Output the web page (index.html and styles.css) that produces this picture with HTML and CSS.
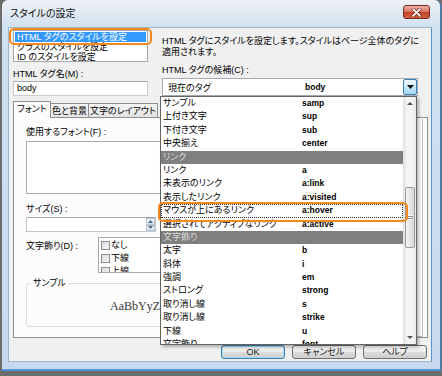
FILE: index.html
```html
<!DOCTYPE html>
<html lang="ja">
<head>
<meta charset="utf-8">
<title>スタイルの設定</title>
<link rel="stylesheet" href="styles.css">
</head>
<body>
<div class="window">
  <div class="titlebar">
    <span class="title">スタイルの設定</span>
    <span class="close"><svg width="11" height="9" viewBox="0 0 11 9"><path d="M2 1.2 L9 7.8 M9 1.2 L2 7.8" stroke="#6a2419" stroke-width="3" stroke-linecap="round"/><path d="M2 1.2 L9 7.8 M9 1.2 L2 7.8" stroke="#fff" stroke-width="1.7" stroke-linecap="round"/></svg></span>
  </div>
  <div class="client">
    <div class="top">
      <div class="col">
        <div class="listbox">
          <div class="li sel">HTML タグのスタイルを設定</div>
          <div class="li">クラスのスタイルを設定</div>
          <div class="li">ID のスタイルを設定</div>
        </div>
        <div class="label lbl-left">HTML タグ名(M) :</div>
        <div class="input">body</div>
      </div>
      <div class="col">
        <div class="desc">HTML タグにスタイルを設定します。スタイルはページ全体のタグに<br>適用されます。</div>
        <div class="label lbl-right">HTML タグの候補(C) :</div>
        <div class="combo">
          <span class="c-name">現在のタグ</span>
          <span class="c-tag">body</span>
          <span class="dd-btn"><svg width="7" height="4" viewBox="0 0 7 4"><path d="M0 0H7L3.5 4Z" fill="#111"/></svg></span>
        </div>
      </div>
    </div>

    <div class="tabs">
      <div class="tab active">フォント</div>
      <div class="tab">色と背景</div>
      <div class="tab">文字のレイアウト</div>
    </div>

    <div class="panel">
      <div class="p-main">
        <div class="label">使用するフォント(F) :</div>
        <div class="fontlist"></div>
        <div class="label lbl-size">サイズ(S) :</div>
        <div class="sizebox">
          <span class="spin">
            <span class="spin-btn"><svg width="5" height="3" viewBox="0 0 5 3"><path d="M2.5 0L5 3H0Z" fill="#4d6a8a"/></svg></span>
            <span class="spin-btn"><svg width="5" height="3" viewBox="0 0 5 3"><path d="M0 0H5L2.5 3Z" fill="#4d6a8a"/></svg></span>
          </span>
        </div>
        <div class="deco-row">
          <div class="label deco-label">文字飾り(D) :</div>
          <div class="checklist">
            <div class="chk"><span class="box"></span>なし</div>
            <div class="chk"><span class="box"></span>下線</div>
            <div class="chk"><span class="box"></span>上線</div>
          </div>
        </div>
        <div class="group">
          <span class="legend">サンプル</span>
          <div class="sample">AaBbYyZz</div>
        </div>
      </div>
      <div class="p-side"></div>
    </div>

    <div class="buttons">
      <div class="btn default">OK</div>
      <div class="btn">キャンセル</div>
      <div class="btn">ヘルプ</div>
    </div>

    <div class="dropdown">
      <div class="rows">
        <div class="row"><span class="n">サンプル</span><span class="t">samp</span></div>
        <div class="row"><span class="n">上付き文字</span><span class="t">sup</span></div>
        <div class="row"><span class="n">下付き文字</span><span class="t">sub</span></div>
        <div class="row"><span class="n">中央揃え</span><span class="t">center</span></div>
        <div class="row head"><span class="n">リンク</span></div>
        <div class="row"><span class="n">リンク</span><span class="t">a</span></div>
        <div class="row"><span class="n">未表示のリンク</span><span class="t">a:link</span></div>
        <div class="row"><span class="n">表示したリンク</span><span class="t">a:visited</span></div>
        <div class="row focus"><span class="n">マウスが上にあるリンク</span><span class="t">a:hover</span></div>
        <div class="row"><span class="n">選択されてアクティブなリンク</span><span class="t">a:active</span></div>
        <div class="row head"><span class="n">文字飾り</span></div>
        <div class="row"><span class="n">太字</span><span class="t">b</span></div>
        <div class="row"><span class="n">斜体</span><span class="t">i</span></div>
        <div class="row"><span class="n">強調</span><span class="t">em</span></div>
        <div class="row"><span class="n">ストロング</span><span class="t">strong</span></div>
        <div class="row"><span class="n">取り消し線</span><span class="t">s</span></div>
        <div class="row"><span class="n">取り消し線</span><span class="t">strike</span></div>
        <div class="row"><span class="n">下線</span><span class="t">u</span></div>
        <div class="row"><span class="n">文字飾り</span><span class="t">font</span></div>
      </div>
      <div class="scrollbar">
        <div class="sb-btn"><svg width="6" height="3" viewBox="0 0 6 3"><path d="M3 0L6 3H0Z" fill="#555"/></svg></div>
        <div class="sb-track"><div class="thumb"><span class="grip"></span></div></div>
        <div class="sb-btn"><svg width="6" height="3" viewBox="0 0 6 3"><path d="M0 0H6L3 3Z" fill="#555"/></svg></div>
      </div>
    </div>

    <div class="mark mark1"></div>
    <div class="mark mark2"></div>
  </div>
</div>
</body>
</html>
```

FILE: styles.css
```css
* { box-sizing: border-box; }
html, body { margin: 0; padding: 0; }
body {
  width: 442px;
  height: 376px;
  overflow: hidden;
  background: #6c6c6c;
  font-family: "Liberation Sans", "Noto Sans CJK JP", sans-serif;
  font-size: 9px;
  font-feature-settings: "palt";
  color: #000;
}

.window {
  margin-left: 2px;
  width: 439px;
  height: 371px;
  background: linear-gradient(#eef2f7 0, #dfe8f2 14px, #d2e1f1 27px, #c6d9ee 100%);
  border-right: 1px solid #3f84cc;
  border-bottom: 2px solid #4f95d8;
  border-radius: 6px 6px 0 0;
  display: flex;
  flex-direction: column;
}

.titlebar {
  height: 27px;
  flex: none;
  display: flex;
  align-items: center;
  padding-left: 8px;
}
.title { font-size: 10px; line-height: 12px; color: #111; }
.close {
  margin-left: auto;
  margin-right: 10px;
  align-self: flex-start;
  margin-top: 5px;
  width: 27px;
  height: 14px;
  border: 1px solid #7a2b20;
  border-radius: 3px;
  background: linear-gradient(#eab1a5 0, #d97a66 45%, #c4432c 52%, #cf5f43 100%);
  display: flex;
  align-items: center;
  justify-content: center;
}
.close svg { display: block; }

.client {
  margin-left: 6px;
  width: 424px;
  height: 335px;
  flex: none;
  background: #f0f0f0;
  border: 1px solid #9fb4cc;
  border-right-color: #5c94cf;
  position: relative;
  padding: 1px 4px 0 4px;
  display: flex;
  flex-direction: column;
}

.top {
  display: grid;
  grid-template-columns: 135px 256px;
  column-gap: 14px;
  margin-top: 1px;
}
.col { display: flex; flex-direction: column; }

.label { line-height: 12px; height: 12px; white-space: nowrap; }
.lbl-left { margin-top: 6px; }
.lbl-right { margin-top: 6px; }

.listbox {
  height: 32px;
  background: #fff;
  border: 1px solid #a3a8b0;
  padding: 1px;
}
.li { line-height: 10px; height: 10px; padding-left: 2px; white-space: nowrap; }
.li.sel { background: #3399ff; color: #fff; }

.input {
  margin-top: 1px;
  height: 15px;
  background: #fff;
  border: 1px solid #c8ccd2;
  border-top-color: #a7abb1;
  line-height: 13px;
  padding-left: 3px;
}

.desc { margin-top: 6px; line-height: 11px; white-space: nowrap; }

.combo {
  margin-top: 2px;
  height: 18px;
  background: #fff;
  border: 1px solid #a7abb1;
  display: flex;
  align-items: center;
  padding-left: 5px;
}
.c-name { width: 137px; }
.c-tag { font-weight: bold; font-size: 8.5px; }
.dd-btn {
  margin-left: auto;
  width: 14px;
  height: 16px;
  border: 1px solid #3c7fb1;
  border-radius: 2px;
  background: linear-gradient(#eaf6fd 0, #d9f0fc 45%, #bee6fd 50%, #a7d9f5 100%);
  display: flex;
  align-items: center;
  justify-content: center;
}
.dd-btn svg { display: block; }

.tabs {
  margin-top: 5px;
  height: 17px;
  display: flex;
  align-items: flex-end;
}
.tab {
  height: 15px;
  line-height: 14px;
  padding: 0;
  border: 1px solid #8c8e94;
  border-bottom: none;
  background: linear-gradient(#f6f6f6, #e2e2e2);
  margin-right: -1px;
  white-space: nowrap;
  text-align: center;
}
.tab:nth-child(1) { width: 38px; }
.tab:nth-child(2) { width: 39px; }
.tab:nth-child(3) { width: 70px; }
.tab.active {
  height: 17px;
  line-height: 15px;
  background: #fcfcfc;
  position: relative;
  z-index: 1;
}

.panel {
  margin-top: -1px;
  height: 221px;
  width: 415px;
  background: #fcfcfc;
  border: 1px solid #8c8e94;
  display: flex;
}
.p-main { flex: 1; padding: 8px 0 0 12px; display: flex; flex-direction: column; }
.p-side {
  width: 9px;
  margin: 1px 4px 0 0;
  background: #fff;
  border: 1px solid #b9bec5;
  border-top: none;
}

.fontlist {
  margin-top: 3px;
  height: 53px;
  width: 300px;
  background: #fff;
  border: 1px solid #a7abb1;
}
.lbl-size { margin-top: 9px; }
.sizebox {
  margin-top: 2px;
  height: 15px;
  width: 130px;
  background: #fff;
  border: 1px solid #c2c6cc;
  border-top-color: #a7abb1;
  display: flex;
  justify-content: flex-end;
}
.spin { width: 9px; display: flex; flex-direction: column; }
.spin-btn {
  flex: 1;
  border: 1px solid #b6c3d1;
  background: linear-gradient(#f3f6fa, #dce5ef);
  display: flex;
  align-items: center;
  justify-content: center;
}
.spin-btn svg { display: block; }

.deco-row { margin-top: 5px; display: flex; }
.deco-label { width: 72px; margin-top: 3px; }
.checklist {
  height: 36px;
  width: 200px;
  background: #fff;
  border: 1px solid #a7abb1;
  overflow: hidden;
  padding-top: 1px;
}
.chk { height: 13px; line-height: 13px; display: flex; align-items: center; padding-left: 2px; }
.box {
  width: 9px;
  height: 9px;
  border: 1px solid #8f8f8f;
  background: linear-gradient(135deg, #dcdcdc, #f6f6f6);
  margin-right: 1px;
}

.group {
  margin-top: 10px;
  height: 44px;
  width: 300px;
  border: 1px solid #d5dfe5;
  border-radius: 3px;
  display: flex;
  flex-direction: column;
}
.legend {
  display: block;
  width: max-content;
  margin: -7px 0 0 4px;
  padding: 0 2px;
  line-height: 12px;
  background: #fcfcfc;
}
.sample {
  margin: 10px 0 0 83px;
  line-height: 14px;
  font-family: "Liberation Serif", serif;
  font-size: 12px;
  color: #3a3a3a;
}

.buttons {
  margin-top: 7px;
  display: flex;
  justify-content: flex-end;
  gap: 7px;
}
.btn {
  width: 64px;
  height: 14px;
  line-height: 12px;
  text-align: center;
  border: 1px solid #707070;
  border-radius: 3px;
  background: linear-gradient(#f2f2f2 0, #ebebeb 48%, #dddddd 52%, #cfcfcf 100%);
  color: #222;
}
.btn.default { border-color: #3c7fb1; box-shadow: inset 0 0 0 1px #a6d9f4; }

.dropdown {
  position: absolute;
  left: 151px;
  top: 68px;
  width: 257px;
  height: 249px;
  background: #fff;
  border: 1px solid #646464;
  box-shadow: 2px 2px 3px rgba(0, 0, 0, 0.28);
  display: flex;
  z-index: 5;
}
.rows { flex: 1; overflow: hidden; }
.row {
  height: 13.4px;
  line-height: 13.4px;
  display: flex;
  padding-left: 2px;
  white-space: nowrap;
}
.row .n { width: 139px; flex: none; }
.row .t { font-weight: bold; font-size: 8.5px; }
.row.head { background: #7f7f7f; color: #dadada; }
.row.focus { outline: 1px dotted #333; outline-offset: -1px; }

.scrollbar {
  width: 13px;
  flex: none;
  display: flex;
  flex-direction: column;
  background: linear-gradient(90deg, #e6e6e6, #f5f5f5 30%, #f5f5f5 70%, #e8e8e8);
  border-left: 1px solid #e3e3e3;
}
.sb-btn {
  height: 13px;
  display: flex;
  align-items: center;
  justify-content: center;
}
.sb-btn svg { display: block; }
.sb-track { flex: 1; padding-top: 77px; }
.thumb {
  height: 61px;
  margin: 0 1px;
  border: 1px solid #9a9a9a;
  border-radius: 2px;
  background: linear-gradient(90deg, #f4f4f4, #e6e6e6 50%, #d6d6d6);
  display: flex;
  align-items: center;
  justify-content: center;
}
.grip {
  width: 6px;
  height: 5px;
  background: repeating-linear-gradient(#f8f8f8 0, #f8f8f8 1px, #8a8a8a 1px, #8a8a8a 2px);
}

.mark {
  position: absolute;
  border: 2px solid #f4891e;
  border-radius: 5px;
  z-index: 6;
}
.mark1 { left: 0; top: 0; width: 143px; height: 17px; }
.mark2 { left: 149px; top: 174px; width: 250px; height: 20px; }
```
